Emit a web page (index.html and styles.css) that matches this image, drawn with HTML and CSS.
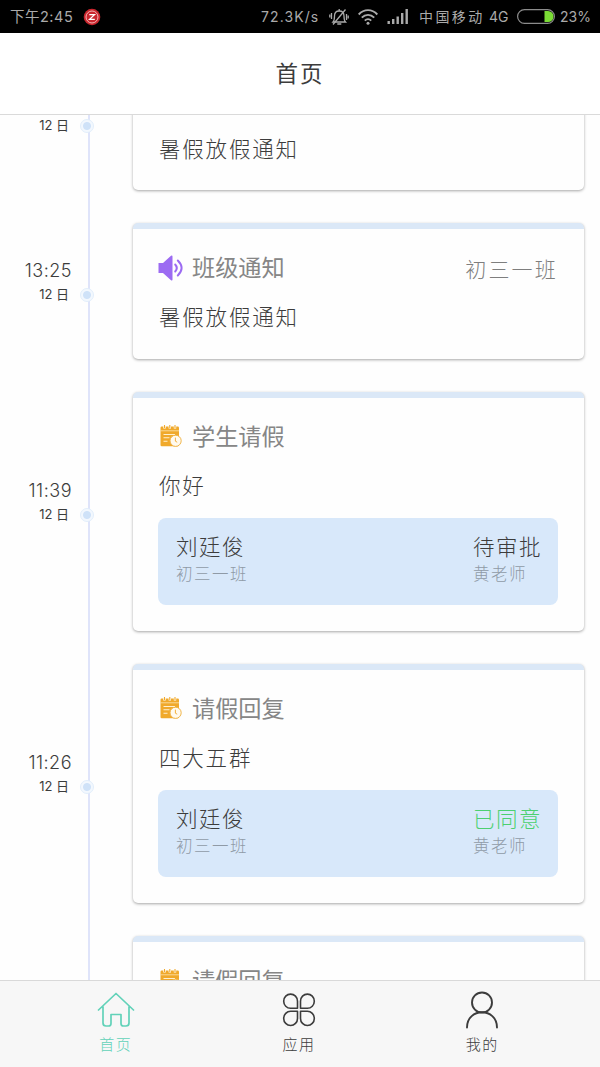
FILE: index.html
```html
<!DOCTYPE html>
<html lang="zh-CN">
<head>
    <meta charset="UTF-8">
    <meta name="viewport" content="width=device-width, initial-scale=1.0">
    <title>首页</title>
    <link rel="stylesheet" href="styles.css">
</head>
<body>
    <!-- shared icons -->
    <svg class="sprite" aria-hidden="true">
        <symbol id="icon-leave" viewBox="0 0 22 22">
            <rect x="0.5" y="1.6" width="18.500" height="19.600" rx="1.200" fill="#f0a92b"/>
            <path d="M4.500 0v3.600M9.800 0v3.600M15 0v3.600" stroke="#fff" stroke-width="2.400"/>
            <path d="M4.500 0v3M9.800 0v3M15 0v3" stroke="#f0a92b" stroke-width="1.100"/>
            <path d="M0.500 5.800h18.500" stroke="#fce3b0" stroke-width="0.800"/>
            <path d="M3.500 9.500h11.500M3.500 12.800h6M3.500 16.300h4" stroke="#fff0d0" stroke-width="1.100"/>
            <circle cx="15.600" cy="15.800" r="5.600" fill="#fffaf0" stroke="#f0b54a" stroke-width="1"/>
            <path d="M15.400 12.600v3.600l1.800 1" fill="none" stroke="#f0a92b" stroke-width="0.900"/>
        </symbol>
    </svg>

    <div class="statusbar">
        <span class="clock">下午2:45</span>
        <svg class="badge" width="18" height="18" viewBox="0 0 18 18">
            <circle cx="9" cy="9" r="8.300" fill="#c9252d"/>
            <circle cx="9" cy="9" r="6" fill="none" stroke="#f3b5b5" stroke-width="1"/>
            <path d="M6.300 6.600h5.200L6.600 11.300h5.200" fill="none" stroke="#fff" stroke-width="1.300"/>
        </svg>
        <span class="speed">72.3K/s</span>
        <svg class="mute" width="20" height="18" viewBox="0 0 20 18" fill="none" stroke="#aaa" stroke-width="1.300">
            <path d="M4 14h12.500c-1.500-1.500-1.500-3-1.500-6 0-3-2-5-4.800-5S5.500 5 5.500 8c0 3 0 4.500-1.500 6z"/>
            <path d="M8.300 16h4M10.200 1v2M4 16.500L16.500 1.500M2.500 5v6M0.800 6.500v3M17.500 6v6M19.200 7.500v3"/>
        </svg>
        <svg class="wifi" width="20" height="16" viewBox="0 0 20 16" fill="none" stroke="#aaa" stroke-width="1.900">
            <path d="M0.700 5.500C6-0.300 14-0.300 19.300 5.500M3.800 8.700c3.500-3.800 8.900-3.800 12.400 0M6.800 11.700c1.900-1.900 4.500-1.900 6.400 0"/>
            <circle cx="10" cy="14.200" r="1.500" fill="#aaa" stroke="none"/>
        </svg>
        <svg class="signal" width="22" height="15" viewBox="0 0 22 15" fill="#aaa">
            <path d="M0.500 12h2.400v3H0.500zM5 10h2.400v5H5zM9.500 7.500h2.400V15H9.500zM14 4h2.400v11H14zM18.500 0h2.400v15h-2.400z"/>
        </svg>
        <span class="carrier">中国移动</span>
        <span class="network">4G</span>
        <svg class="battery" width="38" height="15" viewBox="0 0 38 15">
            <rect x="0.600" y="0.600" width="36.800" height="13.800" rx="6.900" fill="none" stroke="#8c8c8c" stroke-width="1.200"/>
            <path d="M27.500 2h3.500a5.500 5.500 0 0 1 0 11h-3.500z" fill="#7bdc35"/>
        </svg>
        <span class="percent">23%</span>
    </div>

    <header class="header">
        <h1>首页</h1>
    </header>

    <main class="feed">
        <section class="item">
            <div class="when">
                <span class="day">12 日<i class="dot"></i></span>
            </div>
            <div class="card notice">
                <div class="card-head"></div>
                <p class="text">暑假放假通知</p>
            </div>
        </section>

        <section class="item">
            <div class="when">
                <span class="time">13:25</span>
                <span class="day">12 日<i class="dot"></i></span>
            </div>
            <div class="card notice">
                <div class="card-head">
                    <svg class="icon-speaker" width="27" height="26" viewBox="0 0 27 26">
                        <path d="M0.500 8H5L13 0.800q1.500-1 1.500 0.800v22.800q0 1.800-1.500 0.800L5 18H0.500z" fill="#9c6bf2"/>
                        <path d="M17.200 9.500q3.200 3.500 0 7M19.800 5.500q7.600 7.500 0 15" fill="none" stroke="#9c6bf2" stroke-width="2" stroke-linecap="round"/>
                    </svg>
                    <h2>班级通知</h2>
                    <span class="class-name">初三一班</span>
                </div>
                <p class="text">暑假放假通知</p>
            </div>
        </section>

        <section class="item">
            <div class="when">
                <span class="time">11:39</span>
                <span class="day">12 日<i class="dot"></i></span>
            </div>
            <div class="card leave">
                <div class="card-head">
                    <svg class="icon-leave"><use href="#icon-leave"/></svg>
                    <h2>学生请假</h2>
                </div>
                <p class="text">你好</p>
                <div class="detail">
                    <div class="person">
                        <span class="name">刘廷俊</span>
                        <span class="sub">初三一班</span>
                    </div>
                    <div class="person">
                        <span class="name">待审批</span>
                        <span class="sub">黄老师</span>
                    </div>
                </div>
            </div>
        </section>

        <section class="item">
            <div class="when">
                <span class="time">11:26</span>
                <span class="day">12 日<i class="dot"></i></span>
            </div>
            <div class="card leave">
                <div class="card-head">
                    <svg class="icon-leave"><use href="#icon-leave"/></svg>
                    <h2>请假回复</h2>
                </div>
                <p class="text">四大五群</p>
                <div class="detail">
                    <div class="person">
                        <span class="name">刘廷俊</span>
                        <span class="sub">初三一班</span>
                    </div>
                    <div class="person">
                        <span class="name agreed">已同意</span>
                        <span class="sub">黄老师</span>
                    </div>
                </div>
            </div>
        </section>

        <section class="item">
            <div class="when"></div>
            <div class="card leave">
                <div class="card-head">
                    <svg class="icon-leave"><use href="#icon-leave"/></svg>
                    <h2>请假回复</h2>
                </div>
            </div>
        </section>
    </main>

    <nav class="tabbar">
        <a class="tab active">
            <svg width="38" height="38" viewBox="0 0 38 38" fill="none" stroke="currentColor" stroke-width="1.700" stroke-linecap="round" stroke-linejoin="round">
                <path d="M1.500 19L19 2.500 36.500 19M6 15.500V32q0 3 3 3h2.500q2.500 0 2.500-2.500V23.500h10v9q0 2.500 2.500 2.500H29q3 0 3-3V15.500"/>
            </svg>
            <span>首页</span>
        </a>
        <a class="tab">
            <svg width="38" height="38" viewBox="0 0 38 38" fill="none" stroke="currentColor" stroke-width="1.600" stroke-linejoin="round">
                <path d="M17.500 17.300H10.600a6.900 7.100 0 1 1 6.900-7.100zM20.500 17.300h6.900a6.900 7.100 0 1 0-6.900-7.100zM17.500 20.300H10.600a6.900 7.100 0 1 0 6.900 7.100zM20.500 20.300h6.900a6.900 7.100 0 1 1-6.900 7.100z"/>
            </svg>
            <span>应用</span>
        </a>
        <a class="tab">
            <svg width="38" height="38" viewBox="0 0 38 38" fill="none" stroke="currentColor" stroke-width="1.900" stroke-linecap="round">
                <circle cx="19" cy="11.500" r="10"/>
                <path d="M4 36.500C4 16.200 34 16.200 34 36.500"/>
            </svg>
            <span>我的</span>
        </a>
    </nav>
</body>
</html>
```
FILE: styles.css
```css
* {
    box-sizing: border-box;
}
body {
    margin: 0;
    height: 1067px;
    display: flex;
    flex-direction: column;
    overflow: hidden;
    background: #fefefe;
    color: #3c3c3c;
    font-family: Inter, "Noto Sans CJK SC", sans-serif;
}
h1, h2, p {
    margin: 0;
    font-weight: 300;
}
.sprite {
    position: absolute;
    width: 0;
    height: 0;
}

/* status bar */
.statusbar {
    flex: none;
    height: 33px;
    padding: 0 9px 0 10px;
    display: flex;
    align-items: center;
    background: #000;
    color: #aaa;
    font-size: 14px;
    line-height: 33px;
    white-space: nowrap;
}
.clock {
    width: 73px;
    font-size: 14.5px;
    letter-spacing: 0.5px;
}
.speed {
    width: 68px;
    margin-left: auto;
    letter-spacing: 1.1px;
}
.mute {
    margin-right: 9px;
}
.wifi {
    margin-right: 9px;
}
.signal {
    margin-right: 10px;
}
.carrier {
    width: 70px;
    letter-spacing: 2.4px;
}
.network {
    width: 28px;
}
.battery {
    margin-right: 5px;
}
.percent {
    width: 31px;
    font-size: 14px;
}

/* title */
.header {
    flex: none;
    height: 82px;
    border-bottom: 1px solid #dadada;
    display: flex;
    align-items: center;
    justify-content: center;
    background: #fff;
}
.header h1 {
    font-size: 22.5px;
    letter-spacing: 2px;
    font-weight: 400;
    line-height: 30px;
}

/* timeline */
.feed {
    height: 865px;
    overflow: hidden;
}
.item {
    display: flex;
}
.item:first-child {
    margin-top: -60.5px;
}
.item:first-child .when {
    padding-bottom: 25px;
}
.when {
    width: 90px;
    margin-right: 43px;
    padding: 0 16px 49px 0;
    border-right: 2px solid #dfe4fa;
    display: flex;
    flex-direction: column;
    justify-content: center;
    align-items: flex-end;
    line-height: 24px;
}
.time {
    font-size: 18px;
    font-weight: 300;
    letter-spacing: 0.5px;
}
.day {
    position: relative;
    padding-right: 3px;
    font-size: 13px;
    line-height: 23px;
    margin-bottom: 1px;
}
.dot {
    position: absolute;
    top: 5px;
    right: -22px;
    width: 14px;
    height: 14px;
    border: 1px solid #e2eefb;
    border-radius: 50%;
    background: radial-gradient(circle, #cfe2f8 0 3.5px, #f3f8fe 4.5px);
}

/* cards */
.card {
    width: 451px;
    margin-bottom: 33px;
    padding: 23px 26px 0;
    border-top: 6px solid #dbe8f7;
    border-radius: 5px;
    background: #fefefe;
    box-shadow: 0 1px 3px rgba(0, 0, 0, 0.35);
}
.notice {
    height: 135.5px;
}
.leave {
    height: 239px;
}
.card-head {
    display: flex;
    align-items: center;
    height: 32px;
}
.card-head svg {
    flex: none;
}
.card-head h2 {
    font-size: 23.2px;
    line-height: 32px;
    font-weight: 400;
    color: #868686;
}
.icon-speaker {
    margin: 0 7px 0 -1px;
}
.icon-leave {
    width: 22px;
    height: 22px;
    margin: 0 10px 2px 1px;
}
.class-name {
    margin-left: auto;
    font-size: 21px;
    font-weight: 300;
    letter-spacing: 2.2px;
    color: #7e7e7e;
}
.text {
    margin-top: 17px;
    font-size: 21.5px;
    line-height: 32px;
    letter-spacing: 1.8px;
}
.detail {
    height: 87px;
    margin: 16px 0 0 -1px;
    padding: 16px 16px 0 18px;
    display: flex;
    justify-content: space-between;
    border-radius: 8px;
    background: #d8e8fa;
}
.person {
    display: flex;
    flex-direction: column;
}
.name {
    font-size: 21.5px;
    font-weight: 300;
    line-height: 27px;
    letter-spacing: 1.5px;
}
.name.agreed {
    color: #4cd070;
}
.sub {
    font-size: 16.5px;
    font-weight: 300;
    line-height: 26px;
    letter-spacing: 1.5px;
    color: #8f9aa6;
}

/* bottom tabs */
.tabbar {
    flex: none;
    height: 87px;
    padding: 10px 26px 0 24px;
    display: flex;
    border-top: 1px solid #d9d9d9;
    background: #f7f7f7;
}
.tab {
    flex: 1;
    display: flex;
    flex-direction: column;
    align-items: center;
    color: #3c3c3c;
    font-size: 15px;
    font-weight: 300;
    line-height: 20px;
    letter-spacing: 1.5px;
}
.tab span {
    margin-top: 6px;
}
.tab.active {
    color: #62d2b9;
}
```
